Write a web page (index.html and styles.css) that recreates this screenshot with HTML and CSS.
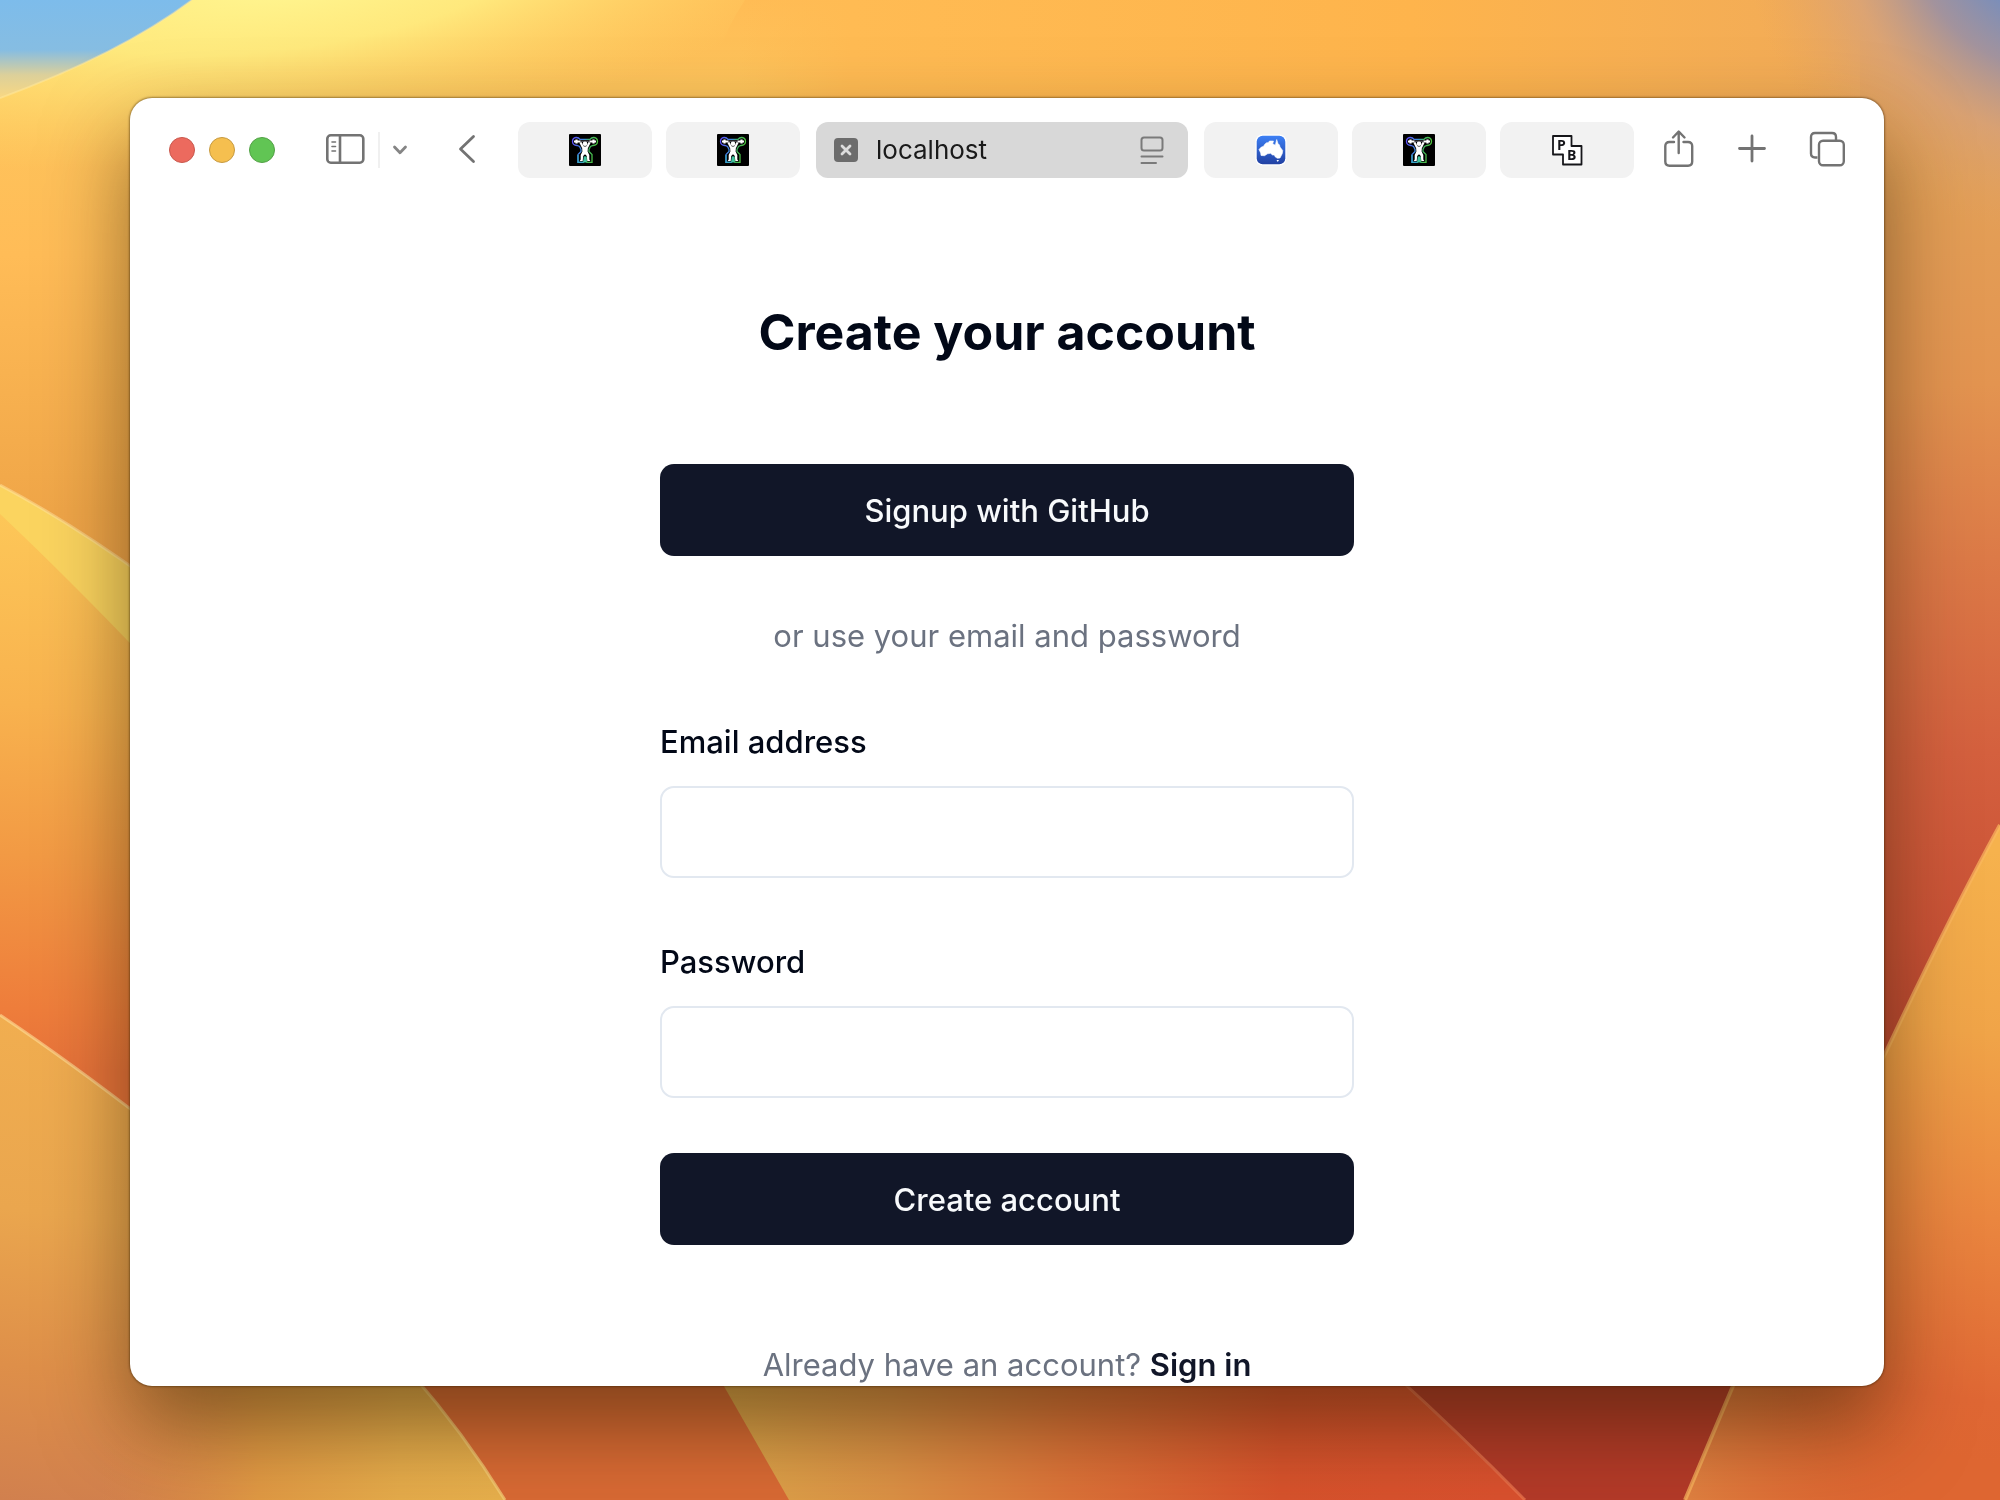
FILE: index.html
```html
<!DOCTYPE html>
<html lang="en">
<head>
<meta charset="utf-8">
<meta name="viewport" content="width=device-width, initial-scale=1">
<title>Create your account</title>
<link rel="stylesheet" href="styles.css">
</head>
<body>
<svg class="wallpaper" viewBox="0 0 2000 1500" preserveAspectRatio="none" aria-hidden="true">
  <defs>
    <linearGradient id="sky" x1="0" y1="0" x2="0" y2="100" gradientUnits="userSpaceOnUse">
      <stop offset="0" stop-color="#7dbceb"/><stop offset=".5" stop-color="#86bde2"/><stop offset=".75" stop-color="#dcd09a"/><stop offset="1" stop-color="#fbd880"/>
    </linearGradient>
    <linearGradient id="main" x1="0" y1="0" x2="0" y2="750" gradientUnits="userSpaceOnUse">
      <stop offset="0" stop-color="#ffbc55"/><stop offset=".12" stop-color="#fec55c"/><stop offset=".34" stop-color="#ffbc57"/><stop offset=".68" stop-color="#f0a648"/><stop offset="1" stop-color="#e89a48"/>
    </linearGradient>
    <radialGradient id="glow" cx="0" cy="0" r="1" gradientTransform="translate(290 -20) rotate(-8) scale(620 170)" gradientUnits="userSpaceOnUse">
      <stop offset="0" stop-color="#fff792"/><stop offset=".4" stop-color="#fff083" stop-opacity=".85"/><stop offset="1" stop-color="#ffd768" stop-opacity="0"/>
    </radialGradient>
    <linearGradient id="topright" x1="740" y1="0" x2="1860" y2="0" gradientUnits="userSpaceOnUse">
      <stop offset="0" stop-color="#ffbb53" stop-opacity="0"/><stop offset=".1" stop-color="#ffbb53"/><stop offset=".6" stop-color="#feb44c"/><stop offset="1" stop-color="#f1ab58"/>
    </linearGradient>
    <linearGradient id="right" x1="1870" y1="0" x2="1920" y2="1080" gradientUnits="userSpaceOnUse">
      <stop offset="0" stop-color="#f2ac58"/><stop offset=".16" stop-color="#e3a158"/><stop offset=".36" stop-color="#e39450"/><stop offset=".52" stop-color="#dc7a47"/><stop offset=".7" stop-color="#d4603e"/><stop offset=".86" stop-color="#ca5236"/><stop offset="1" stop-color="#b7442f"/>
    </linearGradient>
    <radialGradient id="corner" cx="2070" cy="-90" r="330" gradientUnits="userSpaceOnUse">
      <stop offset=".3" stop-color="#6f8dc2"/><stop offset=".5" stop-color="#9a90a4" stop-opacity=".9"/><stop offset=".7" stop-color="#cf9f84" stop-opacity=".6"/><stop offset="1" stop-color="#e3a060" stop-opacity="0"/>
    </radialGradient>
    <linearGradient id="leftMid" x1="0" y1="510" x2="-40" y2="1060" gradientUnits="userSpaceOnUse">
      <stop offset="0" stop-color="#fdc758"/><stop offset=".35" stop-color="#f8b24e"/><stop offset=".62" stop-color="#f29a44"/><stop offset=".9" stop-color="#ee7d3b"/><stop offset="1" stop-color="#e8733a"/>
    </linearGradient>
    <linearGradient id="leftLow" x1="60" y1="1020" x2="0" y2="1500" gradientUnits="userSpaceOnUse">
      <stop offset="0" stop-color="#f1ae50"/><stop offset=".4" stop-color="#eaa64e"/><stop offset=".72" stop-color="#de8f49"/><stop offset="1" stop-color="#d1804e"/>
    </linearGradient>
    <linearGradient id="bottomGold" x1="100" y1="0" x2="500" y2="0" gradientUnits="userSpaceOnUse">
      <stop offset="0" stop-color="#dd8843" stop-opacity="0"/><stop offset=".4" stop-color="#e19a44"/><stop offset=".75" stop-color="#e6ac4b"/><stop offset="1" stop-color="#e8b04c"/>
    </linearGradient>
    <linearGradient id="bottomFade" x1="720" y1="0" x2="1500" y2="0" gradientUnits="userSpaceOnUse">
      <stop offset="0" stop-color="#dea64a"/><stop offset=".22" stop-color="#dc9145"/><stop offset=".45" stop-color="#dc7238"/><stop offset=".72" stop-color="#d8532c"/><stop offset="1" stop-color="#da512e"/>
    </linearGradient>
    <linearGradient id="rightLow" x1="1990" y1="850" x2="1900" y2="1450" gradientUnits="userSpaceOnUse">
      <stop offset="0" stop-color="#f6b24d"/><stop offset=".3" stop-color="#f0a448"/><stop offset=".6" stop-color="#ea863f"/><stop offset=".9" stop-color="#df6734"/><stop offset="1" stop-color="#de6631"/>
    </linearGradient>
    <linearGradient id="bottomRight" x1="1690" y1="0" x2="1920" y2="0" gradientUnits="userSpaceOnUse">
      <stop offset="0" stop-color="#e08040"/><stop offset="1" stop-color="#de6631" stop-opacity="0"/>
    </linearGradient>
  </defs>
  <rect width="2000" height="1500" fill="url(#main)"/>
  <path d="M0 0H745Q712 50 705 110V300H0z" fill="url(#glow)"/>
  <path d="M700 0H2000V300H700z" fill="url(#topright)"/>
  <path d="M0 0H192Q120 54 0 98z" fill="url(#sky)"/>
  <path d="M192 0Q120 54 0 98" fill="none" stroke="#ffeaa0" stroke-opacity=".5" stroke-width="2"/>
  <path d="M1860 0H2000V1100H1860z" fill="url(#right)"/>
  <path d="M1700 0H2000V300H1700z" fill="url(#corner)"/>
  <path d="M0 500L150 660V1130Q70 1062 0 1015z" fill="url(#leftMid)"/>
  <path d="M0 485Q70 522 150 580V664Q70 580 0 514z" fill="#fbd45f"/>
  <path d="M0 485Q70 522 150 580" fill="none" stroke="#ffe3a0" stroke-opacity=".5" stroke-width="3"/>
  <path d="M0 1015Q70 1062 150 1124L520 1500H0z" fill="url(#leftLow)"/>
  <path d="M0 1015Q70 1062 150 1124" fill="none" stroke="#ffdf9a" stroke-opacity=".6" stroke-width="3"/>
  <path d="M100 1380H420Q470 1440 506 1500H100z" fill="url(#bottomGold)"/>
  <path d="M412 1374H720L790 1500H505Q463 1432 412 1374z" fill="#d96a34"/>
  <path d="M412 1374Q463 1432 505 1500" fill="none" stroke="#f6d078" stroke-opacity=".7" stroke-width="3"/>
  <path d="M717 1374H1400L1530 1500H789z" fill="url(#bottomFade)"/>
  <path d="M1394 1374H1740L1685 1500H1525z" fill="#b43a28"/>
  <path d="M1394 1374Q1458 1432 1525 1500" fill="none" stroke="#ee7950" stroke-opacity=".7" stroke-width="3"/>
  <path d="M2000 825Q1940 935 1870 1086L1738 1374L1685 1500H2000z" fill="url(#rightLow)"/>
  <path d="M1738 1374H1960V1500H1685z" fill="url(#bottomRight)"/>
  <path d="M2000 825Q1940 935 1870 1086L1738 1374L1685 1500" fill="none" stroke="#fbb860" stroke-opacity=".7" stroke-width="4"/>
</svg>

<svg class="sprite" aria-hidden="true">
  <defs>
    <linearGradient id="aura" x1="3" y1="12" x2="29" y2="17" gradientUnits="userSpaceOnUse">
      <stop offset="0" stop-color="#5d50f5"/><stop offset=".4" stop-color="#3f8fdc"/><stop offset=".58" stop-color="#3fae6c"/><stop offset="1" stop-color="#50c832"/>
    </linearGradient>
    <linearGradient id="ocean" x1="0" y1="0" x2="0" y2="1">
      <stop offset="0" stop-color="#3d80f5"/><stop offset="1" stop-color="#2140a2"/>
    </linearGradient>
    <symbol id="lifter" viewBox="0 0 32 32">
      <rect width="32" height="32" rx="1" fill="#000"/>
      <path d="M11 5.300Q9.500 3.300 7 3.500Q3.500 4 3.500 7.500Q3.600 11.300 8 11.500L10.500 12.500L12 15.500V17.500L9 20.500V28.300H14.500L15.300 23.500H17L17.800 28.300H23V20.500L20 17.500V15.500L21.500 12.500L24 11.500Q28.400 11.300 28.500 7.500Q28.500 4 25 3.500Q22.500 3.300 21 5.300z" fill="none" stroke="url(#aura)" stroke-width="1.300"/>
      <path d="M9 21V28.300H14.500" fill="none" stroke="#37a6c8" stroke-width="1.300"/>
      <path d="M16.200 22.500V28.500" stroke="#3fc2a0" stroke-width="2.400"/>
      <path d="M5 7.500H11.500M20.500 7.500H27M7.500 5.500V9.500M24.500 5.500V9.500M11.500 8.500L14 13.500M20.500 8.500L18 13.500" fill="none" stroke="#fff" stroke-width="2.200"/>
      <path d="M11 7.200H21" stroke="#8b8b96" stroke-width=".8"/>
      <circle cx="16" cy="9.800" r="2.300" fill="#fff"/>
      <path d="M13 12.500H19L18.600 17.500L20.300 21V25.500L21.300 27H18.300L17.800 22L16 20.300L14.200 22L13.700 27H10.700L11.700 25.500V21L13.400 17.500z" fill="#fff"/>
    </symbol>
  </defs>
</svg>

<main class="desktop">
  <section class="window">
    <header class="toolbar">
      <div class="lights">
        <button class="light light-close" type="button" aria-label="Close window"></button>
        <button class="light light-min" type="button" aria-label="Minimize window"></button>
        <button class="light light-max" type="button" aria-label="Zoom window"></button>
      </div>
      <div class="sidebar-tools">
        <button class="tool" type="button" aria-label="Show sidebar">
          <svg width="42" height="34" viewBox="0 1 42 34" fill="none" stroke="#737373" stroke-width="2.600" stroke-linecap="round"><rect x="3.300" y="3.300" width="36" height="27.400" rx="3.500"/><path d="M16 3.500V30.500"/><path d="M8 10H11.500M8 14.500H11.500M8 19H11.500" stroke-width="1.600"/></svg>
        </button>
        <span class="rule"></span>
        <button class="tool" type="button" aria-label="Tab groups">
          <svg width="16" height="12" viewBox="0 0 16 12" fill="none" stroke="#858585" stroke-width="2.800" stroke-linecap="round" stroke-linejoin="round"><path d="M2.500 3L8 8.800L13.500 3"/></svg>
        </button>
      </div>
      <button class="tool" type="button" aria-label="Back">
        <svg width="18" height="32" viewBox="0 0 18 32" fill="none" stroke="#737373" stroke-width="2.800" stroke-linecap="round" stroke-linejoin="round"><path d="M15.500 2.500L2.500 15L15.500 27.500"/></svg>
      </button>
      <nav class="tabs" aria-label="Open tabs">
        <button class="tab" type="button" aria-label="Lifter"><svg width="32" height="32"><use href="#lifter"/></svg></button>
        <button class="tab" type="button" aria-label="Lifter"><svg width="32" height="32"><use href="#lifter"/></svg></button>
        <div class="tab tab-active">
          <button class="tool" type="button" aria-label="Close tab">
            <svg width="24" height="24" viewBox="0 0 24 24"><rect width="24" height="24" rx="4" fill="#6c6c6c"/><path d="M8 8L16 16M16 8L8 16" stroke="#dcdcdc" stroke-width="2.800" stroke-linecap="round"/></svg>
          </button>
          <span class="address">localhost</span>
          <button class="tool" type="button" aria-label="Page menu">
            <svg width="24" height="30" viewBox="0 0 24 30" fill="none" stroke="#7a7a7a" stroke-width="2" stroke-linecap="round"><rect x="1.500" y="2.500" width="21" height="13" rx="2.500"/><path d="M1.500 21.500H22.500M1.500 28H16"/></svg>
          </button>
        </div>
        <button class="tab" type="button" aria-label="Australia"><svg width="32" height="32" viewBox="-1 -1 32 32"><rect x="-.5" y="-.5" width="31" height="31" rx="7" fill="#fff"/><rect x=".7" y=".7" width="28.600" height="28.600" rx="6" fill="url(#ocean)"/><path d="M3 14.500L5 12.300L7.500 11.300L9 9L11 7.500L12 8L13.500 6L17.500 6L16.700 8.700L19.300 10.200L20.700 4.500L22 8.500L23.500 10L24 12L26.700 15.500L26.300 18.500L24 23L21.500 23.300L19.300 22L18.300 20L16.500 20L14.500 18.300L11.500 18.800L8.500 20.700L5 20.500L4.700 18z" fill="#fff" stroke="#fff" stroke-linejoin="round" stroke-width=".6"/><path d="M20.500 25H23L21.800 27z" fill="#fff"/></svg></button>
        <button class="tab" type="button" aria-label="Lifter"><svg width="32" height="32"><use href="#lifter"/></svg></button>
        <button class="tab" type="button" aria-label="PocketBase"><svg width="32" height="32" viewBox="0 0 32 32"><path d="M2 2H20.500V12H30.500V30.500H12V20.500H2z" fill="#fff" stroke="#16161a" stroke-width="1.800" stroke-linejoin="round"/><text class="pb" x="6" y="16">P</text><text class="pb" x="16" y="26">B</text></svg></button>
      </nav>
      <div class="actions">
        <button class="tool" type="button" aria-label="Share">
          <svg width="34" height="42" viewBox="0 1 34 42" fill="none" stroke="#737373" stroke-width="2.400" stroke-linecap="round" stroke-linejoin="round"><path d="M12 14H7.500Q3.300 14 3.300 18V33.500Q3.300 37.700 7.500 37.700H26Q30.200 37.700 30.200 33.500V18Q30.200 14 26 14H21.500"/><path d="M16.700 25V4.500M11 9.500L16.700 3.500L22.500 9.500"/></svg>
        </button>
        <button class="tool" type="button" aria-label="New tab">
          <svg width="32" height="34" viewBox="0 0 32 34" fill="none" stroke="#737373" stroke-width="2.800" stroke-linecap="round"><path d="M3.500 15.500H28.500M16 3V28"/></svg>
        </button>
        <button class="tool" type="button" aria-label="Show all tabs">
          <svg width="38" height="38" viewBox="0 1 38 38" fill="none" stroke="#737373" stroke-width="2.400"><path d="M9.500 27.500H7Q3 27.500 3 23.500V7Q3 3 7 3H24Q28 3 28 7V10.500"/><rect x="11" y="10.700" width="24.800" height="24.600" rx="4"/></svg>
        </button>
      </div>
    </header>

    <div class="page">
      <h1 class="title">Create your account</h1>
      <button class="btn" type="button">Signup with GitHub</button>
      <p class="hint divider-text">or use your email and password</p>
      <form class="form">
        <div class="field">
          <label class="label" for="email">Email address</label>
          <input class="input" id="email" type="email" autocomplete="email">
        </div>
        <div class="field">
          <label class="label" for="password">Password</label>
          <input class="input" id="password" type="password" autocomplete="new-password">
        </div>
        <button class="btn" type="submit">Create account</button>
      </form>
      <p class="hint">Already have an account? <a class="link" href="#signin">Sign in</a></p>
    </div>
  </section>
</main>
</body>
</html>
```

FILE: styles.css
```css
* {
  box-sizing: border-box;
}

body {
  margin: 0;
  font-family: Inter, "Liberation Sans", sans-serif;
  color: #020817;
}

button {
  font: inherit;
  cursor: pointer;
}

svg {
  display: block;
}

.wallpaper {
  position: fixed;
  inset: 0;
  z-index: -1;
  width: 100%;
  height: 100%;
}

.sprite {
  position: absolute;
  width: 0;
  height: 0;
}

.desktop {
  display: flex;
  height: 100vh;
  padding: 98px 116px 114px 130px;
}

.window {
  flex: 1;
  min-width: 0;
  overflow: hidden;
  border-radius: 22px;
  background: #fff;
  box-shadow:
    0 0 2px 1px rgba(60, 35, 0, 0.45),
    0 40px 84px 0 rgba(40, 25, 0, 0.5);
}

/* Browser toolbar */

.toolbar {
  display: flex;
  align-items: center;
  padding: 24px 38px 24px 39px;
}

.lights {
  display: flex;
  gap: 14px;
  margin-right: 49px;
}

.light {
  width: 26px;
  height: 26px;
  padding: 0;
  border: 1px solid;
  border-radius: 50%;
}

.light-close {
  background: #ec6a5e;
  border-color: #c9574c;
}

.light-min {
  background: #f5bf4f;
  border-color: #c79a3f;
}

.light-max {
  background: #61c554;
  border-color: #52a045;
}

.sidebar-tools {
  display: flex;
  align-items: center;
  gap: 12px;
  margin-right: 50px;
}

.rule {
  width: 2px;
  height: 36px;
  background: #f0f0f0;
}

.tool {
  flex: none;
  padding: 0;
  border: 0;
  background: none;
}

.tabs {
  display: grid;
  flex: 1;
  grid-template-columns: 134fr 134fr 376fr 134fr 134fr 134fr;
  gap: 14px;
  min-width: 0;
  margin: 0 28px 0 42px;
}

.tab {
  display: flex;
  align-items: center;
  justify-content: center;
  min-width: 0;
  height: 56px;
  padding: 0;
  border: 0;
  border-radius: 12px;
  background: #f2f2f2;
}

.tab-active {
  gap: 18px;
  margin: 0 2px;
  padding: 0 24px 0 18px;
  background: #d8d8d8;
}

.address {
  flex: 1;
  min-width: 0;
  font-size: 26px;
  line-height: 32px;
  color: #1a1a1a;
}

.pb {
  font: bold 14px "Open Sans", sans-serif;
  fill: #16161a;
}

.actions {
  display: flex;
  align-items: center;
  gap: 40px;
}

/* Sign-up page */

.page {
  display: flex;
  flex-direction: column;
  max-width: 694px;
  margin: 0 auto;
  padding: 98px 0 60px;
}

.title {
  margin: 0 0 100px;
  font-size: 50px;
  font-weight: 700;
  line-height: 64px;
  text-align: center;
}

.btn {
  width: 100%;
  height: 92px;
  padding: 0 32px;
  border: 0;
  border-radius: 14px;
  background: #111628;
  color: #f8fafc;
  font-size: 31px;
  font-weight: 500;
}

.hint {
  margin: 0;
  font-size: 31px;
  line-height: 40px;
  text-align: center;
  color: #6b7280;
}

.divider-text {
  margin: 60px 0 70px;
}

.form {
  display: flex;
  flex-direction: column;
  margin-bottom: 100px;
}

.field {
  display: flex;
  flex-direction: column;
  gap: 28px;
}

.field + .field {
  margin: 68px 0 55px;
}

.label {
  font-size: 31px;
  font-weight: 500;
  line-height: 32px;
}

.input {
  width: 100%;
  height: 92px;
  padding: 0 24px;
  border: 2px solid #e2e8f0;
  border-radius: 14px;
  background: #fff;
  font: inherit;
  font-size: 31px;
}

.link {
  color: #111628;
  font-weight: 600;
  text-decoration: none;
}
```
